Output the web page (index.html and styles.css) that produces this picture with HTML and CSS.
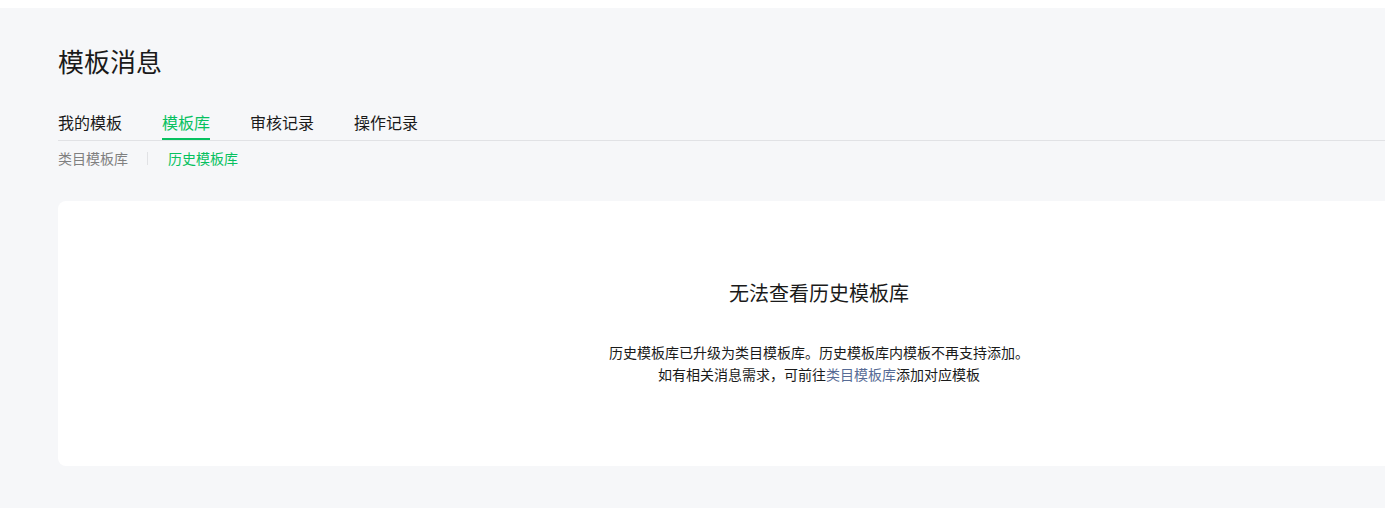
FILE: index.html
```html
<!DOCTYPE html>
<html lang="zh-CN">
<head>
<meta charset="utf-8">
<title>模板消息</title>
<link rel="stylesheet" href="styles.css">
</head>
<body>
<div class="page">
  <h1 class="title">模板消息</h1>
  <div class="tabs">
    <span class="tab">我的模板</span>
    <span class="tab active">模板库</span>
    <span class="tab">审核记录</span>
    <span class="tab">操作记录</span>
  </div>
  <div class="subtabs">
    <span class="subtab">类目模板库</span>
    <span class="divider"></span>
    <span class="subtab active">历史模板库</span>
  </div>
  <div class="card">
    <h2 class="card-title">无法查看历史模板库</h2>
    <p class="card-desc">历史模板库已升级为类目模板库。历史模板库内模板不再支持添加。<br>如有相关消息需求，可前往<a class="link">类目模板库</a>添加对应模板</p>
  </div>
</div>
</body>
</html>
```

FILE: styles.css
```css
html, body {
  margin: 0;
  padding: 0;
  overflow: hidden;
  background: #ffffff;
}
body {
  font-family: "Noto Sans CJK SC", "Noto Sans", sans-serif;
  color: #1a1a1a;
}
.page {
  margin-top: 8px;
  background: #f6f7f9;
  height: 500px;
  padding-left: 58px;
  box-sizing: border-box;
  overflow: hidden;
}
.title {
  margin: 0;
  padding-top: 35px;
  font-size: 26px;
  line-height: 36px;
  font-weight: 400;
  color: #1a1a1a;
}
.tabs {
  display: flex;
  gap: 40px;
  margin-top: 31px;
  border-bottom: 1px solid #e1e2e5;
}
.tab {
  font-size: 16px;
  line-height: 24px;
  padding-bottom: 4px;
  border-bottom: 2px solid transparent;
  color: #1a1a1a;
}
.tab.active {
  color: #07c160;
  border-bottom-color: #07c160;
}
.subtabs {
  display: flex;
  align-items: center;
  margin-top: 7px;
  height: 20px;
}
.subtab {
  font-size: 14px;
  line-height: 20px;
  color: #808080;
}
.subtab.active {
  color: #07c160;
}
.divider {
  width: 1px;
  height: 13px;
  background: #e1e2e5;
  margin: 0 20px 0 19px;
}
.card {
  margin-top: 33px;
  width: 1522px;
  height: 265px;
  box-sizing: border-box;
  background: #ffffff;
  border-radius: 8px;
  padding-top: 78px;
  text-align: center;
}
.card-title {
  margin: 0;
  font-size: 20px;
  line-height: 28px;
  font-weight: 400;
  color: #1a1a1a;
}
.card-desc {
  margin: 34px 0 0;
  font-size: 14px;
  line-height: 22px;
  color: #1a1a1a;
}
.link {
  color: #576b95;
  text-decoration: none;
}
```
